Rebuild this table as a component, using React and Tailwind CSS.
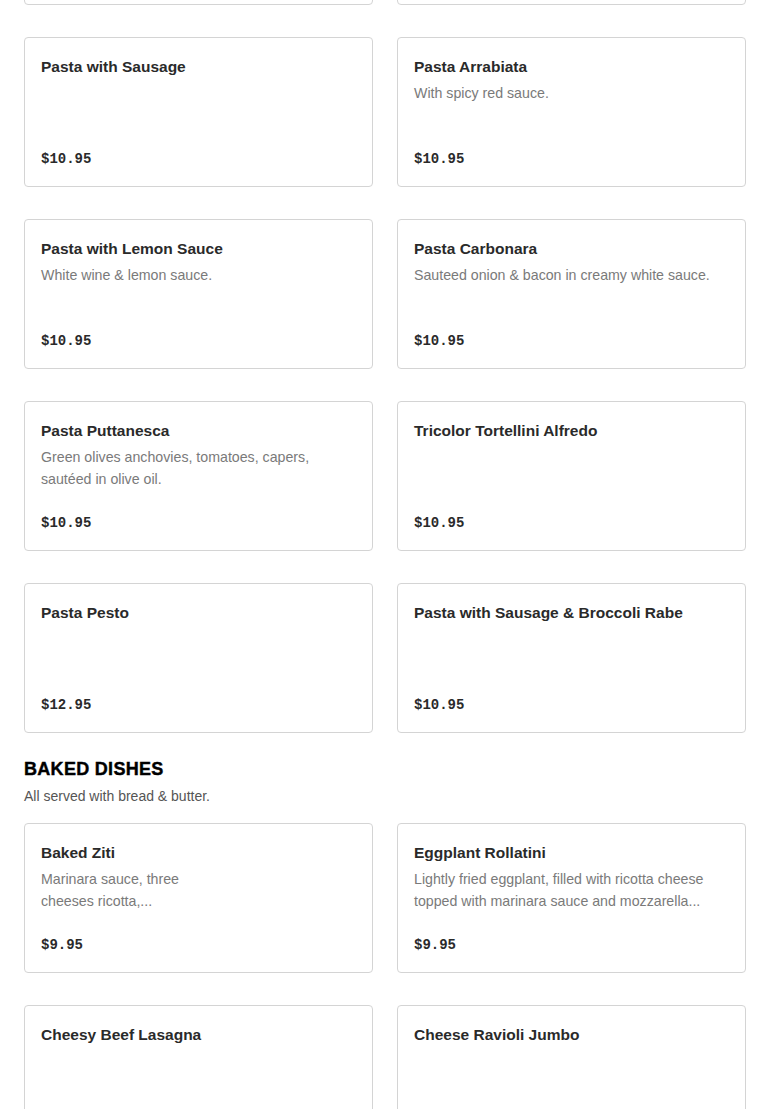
import React from "react";

const pasta = [
  { name: "", desc: "", price: "" },
  { name: "", desc: "", price: "" },
  { name: "Pasta with Sausage", desc: "", price: "$10.95" },
  { name: "Pasta Arrabiata", desc: "With spicy red sauce.", price: "$10.95" },
  { name: "Pasta with Lemon Sauce", desc: "White wine & lemon sauce.", price: "$10.95" },
  { name: "Pasta Carbonara", desc: "Sauteed onion & bacon in creamy white sauce.", price: "$10.95" },
  { name: "Pasta Puttanesca", desc: "Green olives anchovies, tomatoes, capers, sautéed in olive oil.", price: "$10.95" },
  { name: "Tricolor Tortellini Alfredo", desc: "", price: "$10.95" },
  { name: "Pasta Pesto", desc: "", price: "$12.95" },
  { name: "Pasta with Sausage & Broccoli Rabe", desc: "", price: "$10.95" },
];

const baked = [
  { name: "Baked Ziti", desc: "Marinara sauce, three cheeses ricotta,...", price: "$9.95", narrow: true },
  { name: "Eggplant Rollatini", desc: "Lightly fried eggplant, filled with ricotta cheese topped with marinara sauce and mozzarella...", price: "$9.95" },
  // prices of these two sit below the fold
  { name: "Cheesy Beef Lasagna", desc: "", price: "" },
  { name: "Cheese Ravioli Jumbo", desc: "", price: "" },
];

function ItemCard({ item }) {
  return (
    <div className="h-[150px] flex flex-col justify-between rounded border border-[#d4d4d4] bg-white px-4 pt-[17px] pb-[17px]">
      <div>
        <div className="text-[15.5px] leading-6 font-semibold text-[#2a2a2a]">{item.name}</div>
        {item.desc && (
          <div className={`mt-[3px] text-[14.2px] leading-[22px] text-[#7a7a7a] ${item.narrow ? "max-w-[170px]" : ""}`}>
            {item.desc}
          </div>
        )}
      </div>
      <div className="font-['Liberation_Mono',monospace] text-[14px] leading-5 font-bold text-[#2a2a2a]">
        {item.price}
      </div>
    </div>
  );
}

export default function App() {
  return (
    <div className="h-[1109px] overflow-hidden bg-white font-['Liberation_Sans',Arial,sans-serif] px-6">
      <div className="-mt-[145px] grid grid-cols-2 gap-x-6 gap-y-8">
        {pasta.map((p, i) => (
          <ItemCard key={i} item={p} />
        ))}
      </div>

      <div className="mt-[24px]">
        <h2 className="text-[18px] leading-6 font-extrabold tracking-[0.3px] text-black uppercase [-webkit-text-stroke:0.4px_black]">Baked Dishes</h2>
        <p className="mt-[4px] text-[14px] leading-[22px] text-[#555]">All served with bread &amp; butter.</p>
      </div>

      <div className="mt-[16px] grid grid-cols-2 gap-x-6 gap-y-8">
        {baked.map((p) => (
          <ItemCard key={p.name} item={p} />
        ))}
      </div>
    </div>
  );
}
